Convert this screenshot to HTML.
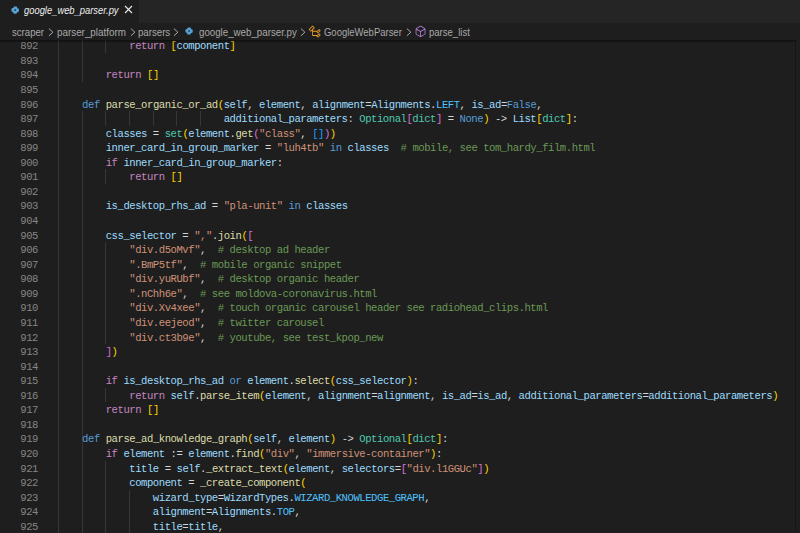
<!DOCTYPE html>
<html><head><meta charset="utf-8">
<style>
html,body{margin:0;padding:0;}
body{width:800px;height:533px;overflow:hidden;background:#1e1e1e;position:relative;font-family:"Liberation Sans",sans-serif;}
#tabs{position:absolute;left:0;top:0;width:800px;height:23px;background:#252526;}
#tab{position:absolute;left:0;top:0;width:139px;height:23px;background:#1e1e1e;}
#tab .name{position:absolute;left:24.25px;top:4.6px;font-size:10px;line-height:12px;font-style:italic;color:#ececec;white-space:nowrap;transform:scaleX(0.938);transform-origin:0 0;}
#tab .x{position:absolute;left:123.8px;top:4.9px;width:9px;height:9px;}
#crumbs{position:absolute;left:0;top:23px;width:800px;height:17px;background:#1e1e1e;font-size:10.5px;line-height:12px;color:#a9a9a9;}
#crumbs span{position:absolute;top:3.1px;white-space:nowrap;transform-origin:0 0;}
#crumbs svg{position:absolute;}
#shadow{position:absolute;left:0;top:40.3px;width:796px;height:3px;background:linear-gradient(#00000080,#00000000);z-index:5;}
#editor{position:absolute;left:0;top:40px;width:800px;height:493px;overflow:hidden;}
#inner{position:absolute;left:0;top:-40px;width:800px;height:533px;}
.nm{position:absolute;left:0;width:38px;text-align:right;height:14.56px;line-height:14.56px;font-family:"Liberation Mono",monospace;font-size:10.6px;letter-spacing:-0.46px;color:#858585;}
.ln{position:absolute;left:58.5px;height:14.56px;line-height:14.56px;white-space:pre;font-family:"Liberation Mono",monospace;font-size:10.6px;letter-spacing:-0.46px;color:#d4d4d4;}
.g{position:absolute;width:1px;background:#363636;}
.k{color:#569cd6}.c{color:#c586c0}.f{color:#dcdcaa}.v{color:#9cdcfe}.s{color:#ce9178}.m{color:#6a9955}.t{color:#4ec9b0}.n{color:#4fc1ff}
.b1{color:#ffd700}.b2{color:#da70d6}.b3{color:#179fff}
#vline{position:absolute;left:795px;top:40px;width:1px;height:493px;background:#161616;}
</style></head><body>
<div id="tabs">
 <div id="tab">
  <svg style="position:absolute;left:10.6px;top:5.8px" width="8.4" height="8.2" viewBox="0 0 16 16"><g fill="#55a2d6"><rect x="4.5" y="0.8" width="7.5" height="5.7" rx="2.4"/><rect x="0.8" y="4" width="5.7" height="7.5" rx="2.4"/><rect x="4.5" y="4.5" width="2.5" height="2.5"/><rect x="4" y="9.5" width="7.5" height="5.7" rx="2.4"/><rect x="9.5" y="4.5" width="5.7" height="7.5" rx="2.4"/><rect x="9" y="9" width="2.5" height="2.5"/></g></svg>
  <span class="name">google_web_parser.py</span>
  <svg class="x" viewBox="0 0 9 9"><path d="M1 1L8 8M8 1L1 8" stroke="#e4e4e4" stroke-width="1.2"/></svg>
 </div>
</div>
<div id="crumbs">
 <span style="left:11.85px;transform:scaleX(0.9154)">scraper</span>
 <svg style="left:47.8px;top:4.6px" width="6" height="9" viewBox="0 0 6 9"><path d="M0.9 0.6L4.9 4.2L0.9 7.8" fill="none" stroke="#acacac" stroke-width="1"/></svg>
 <span style="left:56.5px;transform:scaleX(0.9371)">parser_platform</span>
 <svg style="left:129.8px;top:4.6px" width="6" height="9" viewBox="0 0 6 9"><path d="M0.9 0.6L4.9 4.2L0.9 7.8" fill="none" stroke="#acacac" stroke-width="1"/></svg>
 <span style="left:137.6px;transform:scaleX(0.9197)">parsers</span>
 <svg style="left:173.4px;top:4.6px" width="6" height="9" viewBox="0 0 6 9"><path d="M0.9 0.6L4.9 4.2L0.9 7.8" fill="none" stroke="#acacac" stroke-width="1"/></svg>
 <svg style="left:184.8px;top:3.8px" width="8.2" height="8" viewBox="0 0 16 16"><g fill="#55a2d6"><rect x="4.5" y="0.8" width="7.5" height="5.7" rx="2.4"/><rect x="0.8" y="4" width="5.7" height="7.5" rx="2.4"/><rect x="4.5" y="4.5" width="2.5" height="2.5"/><rect x="4" y="9.5" width="7.5" height="5.7" rx="2.4"/><rect x="9.5" y="4.5" width="5.7" height="7.5" rx="2.4"/><rect x="9" y="9" width="2.5" height="2.5"/></g></svg>
 <span style="left:198.6px;transform:scaleX(0.9257)">google_web_parser.py</span>
 <svg style="left:300.2px;top:4.6px" width="6" height="9" viewBox="0 0 6 9"><path d="M0.9 0.6L4.9 4.2L0.9 7.8" fill="none" stroke="#acacac" stroke-width="1"/></svg>
 <svg style="left:308.45px;top:1.65px" width="13.6" height="13.6" viewBox="0 0 16 16"><path fill="#ee9d28" d="M11.34 9.71h.71l2.67-2.67v-.71L13.38 5h-.7l-1.82 1.81h-5V5.56l1.86-1.85V3l-2-2H5L1 5v.71l2 2h.71l1.140-1.15v5.79l.5.5H10v.52l1.33 1.34h.71l2.670-2.67v-.71L13.37 10h-.7l-1.86 1.85h-5v-4H10v.48l1.34 1.38zm1.69-3.65l.63.63-2 2-.63-.63 2-2zm0 5l.63.63-2 2-.63-.63 2-2zM3.35 6.65L2.06 5.36l3.29-3.29 1.29 1.29-3.29 3.29z"/></svg>
 <span style="left:323.6px;transform:scaleX(0.9027)">GoogleWebParser</span>
 <svg style="left:405.6px;top:4.6px" width="6" height="9" viewBox="0 0 6 9"><path d="M0.9 0.6L4.9 4.2L0.9 7.8" fill="none" stroke="#acacac" stroke-width="1"/></svg>
 <svg style="left:413.7px;top:1.7px" width="13.1" height="13.1" viewBox="0 0 16 16"><path fill="#b180d7" d="M13.51 4l-5-3h-1l-5 3-.49.86v6l.49.85 5 3h1l5-3 .49-.85v-6L13.51 4zm-6 9.56l-4.5-2.7V5.7l4.5 2.45v5.41zM3.27 4.7l4.74-2.84 4.74 2.84-4.74 2.59L3.27 4.7zm9.74 6.16l-4.5 2.7V8.15l4.5-2.45v5.160z"/></svg>
 <span style="left:428.6px;transform:scaleX(0.908)">parse_list</span>
</div>
<div id="editor"><div id="inner">
<div class="g" style="left:58.10px;top:38.30px;height:495.04px"></div>
<div class="g" style="left:81.70px;top:38.30px;height:43.68px"></div>
<div class="g" style="left:81.70px;top:111.10px;height:422.24px"></div>
<div class="g" style="left:105.30px;top:38.30px;height:14.56px"></div>
<div class="g" style="left:105.30px;top:111.10px;height:14.56px"></div>
<div class="g" style="left:105.30px;top:169.34px;height:14.56px"></div>
<div class="g" style="left:105.30px;top:242.14px;height:101.92px"></div>
<div class="g" style="left:105.30px;top:387.74px;height:14.56px"></div>
<div class="g" style="left:105.30px;top:460.54px;height:72.80px"></div>
<div class="g" style="left:128.90px;top:111.10px;height:14.56px"></div>
<div class="g" style="left:128.90px;top:489.66px;height:43.68px"></div>
<div class="g" style="left:152.50px;top:111.10px;height:14.56px"></div>
<div class="g" style="left:176.10px;top:111.10px;height:14.56px"></div>
<div class="g" style="left:199.70px;top:111.10px;height:14.56px"></div>
<div class="nm" style="top:39.30px">892</div>
<div class="nm" style="top:53.86px">893</div>
<div class="nm" style="top:68.42px">894</div>
<div class="nm" style="top:82.98px">895</div>
<div class="nm" style="top:97.54px">896</div>
<div class="nm" style="top:112.10px">897</div>
<div class="nm" style="top:126.66px">898</div>
<div class="nm" style="top:141.22px">899</div>
<div class="nm" style="top:155.78px">900</div>
<div class="nm" style="top:170.34px">901</div>
<div class="nm" style="top:184.90px">902</div>
<div class="nm" style="top:199.46px">903</div>
<div class="nm" style="top:214.02px">904</div>
<div class="nm" style="top:228.58px">905</div>
<div class="nm" style="top:243.14px">906</div>
<div class="nm" style="top:257.70px">907</div>
<div class="nm" style="top:272.26px">908</div>
<div class="nm" style="top:286.82px">909</div>
<div class="nm" style="top:301.38px">910</div>
<div class="nm" style="top:315.94px">911</div>
<div class="nm" style="top:330.50px">912</div>
<div class="nm" style="top:345.06px">913</div>
<div class="nm" style="top:359.62px">914</div>
<div class="nm" style="top:374.18px">915</div>
<div class="nm" style="top:388.74px">916</div>
<div class="nm" style="top:403.30px">917</div>
<div class="nm" style="top:417.86px">918</div>
<div class="nm" style="top:432.42px">919</div>
<div class="nm" style="top:446.98px">920</div>
<div class="nm" style="top:461.54px">921</div>
<div class="nm" style="top:476.10px">922</div>
<div class="nm" style="top:490.66px">923</div>
<div class="nm" style="top:505.22px">924</div>
<div class="nm" style="top:519.78px">925</div>
<div class="ln" style="top:39.30px">            <span class="c">return</span> <span class="b1">[</span><span class="v">component</span><span class="b1">]</span></div>
<div class="ln" style="top:53.86px"></div>
<div class="ln" style="top:68.42px">        <span class="c">return</span> <span class="b1">[]</span></div>
<div class="ln" style="top:82.98px"></div>
<div class="ln" style="top:97.54px">    <span class="k">def</span> <span class="f">parse_organic_or_ad</span><span class="b1">(</span><span class="v">self</span>, <span class="v">element</span>, <span class="v">alignment</span>=<span class="v">Alignments</span>.<span class="n">LEFT</span>, <span class="v">is_ad</span>=<span class="k">False</span>,</div>
<div class="ln" style="top:112.10px">                            <span class="v">additional_parameters</span>: <span class="t">Optional</span><span class="b2">[</span><span class="t">dict</span><span class="b2">]</span> = <span class="k">None</span><span class="b1">)</span> -&gt; <span class="v">List</span><span class="b1">[</span><span class="t">dict</span><span class="b1">]</span>:</div>
<div class="ln" style="top:126.66px">        <span class="v">classes</span> = <span class="t">set</span><span class="b1">(</span><span class="v">element</span>.<span class="f">get</span><span class="b2">(</span><span class="s">"class"</span>, <span class="b3">[]</span><span class="b2">)</span><span class="b1">)</span></div>
<div class="ln" style="top:141.22px">        <span class="v">inner_card_in_group_marker</span> = <span class="s">"luh4tb"</span> <span class="k">in</span> <span class="v">classes</span>  <span class="m"># mobile, see tom_hardy_film.html</span></div>
<div class="ln" style="top:155.78px">        <span class="c">if</span> <span class="v">inner_card_in_group_marker</span>:</div>
<div class="ln" style="top:170.34px">            <span class="c">return</span> <span class="b1">[]</span></div>
<div class="ln" style="top:184.90px"></div>
<div class="ln" style="top:199.46px">        <span class="v">is_desktop_rhs_ad</span> = <span class="s">"pla-unit"</span> <span class="k">in</span> <span class="v">classes</span></div>
<div class="ln" style="top:214.02px"></div>
<div class="ln" style="top:228.58px">        <span class="v">css_selector</span> = <span class="s">","</span>.<span class="f">join</span><span class="b1">(</span><span class="b2">[</span></div>
<div class="ln" style="top:243.14px">            <span class="s">"div.d5oMvf"</span>,  <span class="m"># desktop ad header</span></div>
<div class="ln" style="top:257.70px">            <span class="s">".BmP5tf"</span>,  <span class="m"># mobile organic snippet</span></div>
<div class="ln" style="top:272.26px">            <span class="s">"div.yuRUbf"</span>,  <span class="m"># desktop organic header</span></div>
<div class="ln" style="top:286.82px">            <span class="s">".nChh6e"</span>,  <span class="m"># see moldova-coronavirus.html</span></div>
<div class="ln" style="top:301.38px">            <span class="s">"div.Xv4xee"</span>,  <span class="m"># touch organic carousel header see radiohead_clips.html</span></div>
<div class="ln" style="top:315.94px">            <span class="s">"div.eejeod"</span>,  <span class="m"># twitter carousel</span></div>
<div class="ln" style="top:330.50px">            <span class="s">"div.ct3b9e"</span>,  <span class="m"># youtube, see test_kpop_new</span></div>
<div class="ln" style="top:345.06px">        <span class="b2">]</span><span class="b1">)</span></div>
<div class="ln" style="top:359.62px"></div>
<div class="ln" style="top:374.18px">        <span class="c">if</span> <span class="v">is_desktop_rhs_ad</span> <span class="k">or</span> <span class="v">element</span>.<span class="f">select</span><span class="b1">(</span><span class="v">css_selector</span><span class="b1">)</span>:</div>
<div class="ln" style="top:388.74px">            <span class="c">return</span> <span class="v">self</span>.<span class="f">parse_item</span><span class="b1">(</span><span class="v">element</span>, <span class="v">alignment</span>=<span class="v">alignment</span>, <span class="v">is_ad</span>=<span class="v">is_ad</span>, <span class="v">additional_parameters</span>=<span class="v">additional_parameters</span><span class="b1">)</span></div>
<div class="ln" style="top:403.30px">        <span class="c">return</span> <span class="b1">[]</span></div>
<div class="ln" style="top:417.86px"></div>
<div class="ln" style="top:432.42px">    <span class="k">def</span> <span class="f">parse_ad_knowledge_graph</span><span class="b1">(</span><span class="v">self</span>, <span class="v">element</span><span class="b1">)</span> -&gt; <span class="t">Optional</span><span class="b1">[</span><span class="t">dict</span><span class="b1">]</span>:</div>
<div class="ln" style="top:446.98px">        <span class="c">if</span> <span class="v">element</span> := <span class="v">element</span>.<span class="f">find</span><span class="b1">(</span><span class="s">"div"</span>, <span class="s">"immersive-container"</span><span class="b1">)</span>:</div>
<div class="ln" style="top:461.54px">            <span class="v">title</span> = <span class="v">self</span>.<span class="f">_extract_text</span><span class="b1">(</span><span class="v">element</span>, <span class="v">selectors</span>=<span class="b2">[</span><span class="s">"div.l1GGUc"</span><span class="b2">]</span><span class="b1">)</span></div>
<div class="ln" style="top:476.10px">            <span class="v">component</span> = <span class="f">_create_component</span><span class="b1">(</span></div>
<div class="ln" style="top:490.66px">                <span class="v">wizard_type</span>=<span class="v">WizardTypes</span>.<span class="n">WIZARD_KNOWLEDGE_GRAPH</span>,</div>
<div class="ln" style="top:505.22px">                <span class="v">alignment</span>=<span class="v">Alignments</span>.<span class="n">TOP</span>,</div>
<div class="ln" style="top:519.78px">                <span class="v">title</span>=<span class="v">title</span>,</div>
</div></div>
<div id="shadow"></div>
<div id="vline"></div>
</body></html>
